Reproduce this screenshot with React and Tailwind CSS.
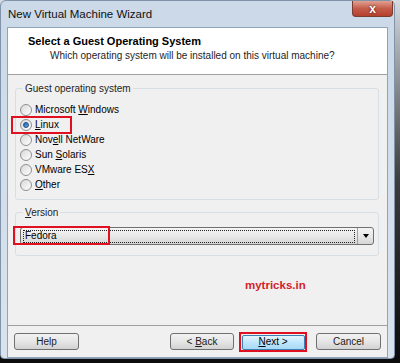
const Radio = ({ checked }) => (
  <span className="w-[12px] h-[12px] rounded-full border border-[#8e8f8f] bg-gradient-to-br from-[#d8d8d8] to-[#ffffff] flex items-center justify-center shrink-0">
    {checked && (
      <span className="w-[6px] h-[6px] rounded-full bg-gradient-to-br from-[#1b5ea5] to-[#6ab0e8] border border-[#1c4f85]" />
    )}
  </span>
);

const Mn = ({ children }) => <span className="underline underline-offset-1">{children}</span>;

const options = [
  { id: 'win', label: <>Microsoft <Mn>W</Mn>indows</> },
  { id: 'linux', label: <><Mn>L</Mn>inux</>, checked: true, marked: true },
  { id: 'novell', label: <>Nov<Mn>e</Mn>ll NetWare</> },
  { id: 'sun', label: <>Sun <Mn>S</Mn>olaris</> },
  { id: 'esx', label: <>VMware ES<Mn>X</Mn></> },
  { id: 'other', label: <><Mn>O</Mn>ther</> },
];

const Button = ({ children, className = '' }) => (
  <button
    className={`h-[17px] rounded-[3px] border border-[#707070] bg-gradient-to-b from-[#f2f2f2] via-[#e6e6e6] to-[#d2d2d2] text-[10px] leading-none text-[#1a1a1a] ${className}`}
  >
    {children}
  </button>
);

export default function App() {
  return (
    <div className="w-[400px] h-[363px] bg-gradient-to-b from-[#d4dbe2] via-[#3c3c3c] to-[#0c0c0c] font-['Liberation_Sans',Arial,sans-serif] text-[10px] text-black overflow-hidden">
      <div className="w-[395px] h-[359px] rounded-t-[6px] rounded-b-[4px] border border-[#8193a8] bg-gradient-to-b from-[#cbd9e8] to-[#d8e3ee] flex flex-col">
        {/* title bar */}
        <div className="h-[26px] flex items-start shrink-0">
          <div className="pl-[7px] pt-[6px] text-[11.5px] leading-[14px] text-[#111]">New Virtual Machine Wizard</div>
          <div className="ml-auto mr-[1px] w-[41px] h-[16px] rounded-b-[4px] border border-t-0 border-[#7a3b32] bg-gradient-to-b from-[#dfa192] via-[#c45c4a] to-[#b4402c] flex items-center justify-center">
            <span className="text-white font-bold text-[12px] leading-none [text-shadow:0_0_2px_#3a0a00]">x</span>
          </div>
        </div>

        {/* client */}
        <div className="mx-[6px] flex-1 flex flex-col border border-[#8fa3ba]">
          <div className="h-[47px] bg-white border-b border-[#a0a0a0] pt-[7px] shrink-0">
            <div className="pl-[20px] text-[11px] font-bold leading-[13px]">Select a Guest Operating System</div>
            <div className="pl-[42px] mt-[1px] leading-[13px] text-[#1e1e1e]">Which operating system will be installed on this virtual machine?</div>
          </div>

          <div className="flex-1 bg-[#f0f0f0] px-[7px] pt-[7px]">
            <fieldset className="border border-[#d5dfe5] rounded-[3px] pl-[4px] pb-[7px] pt-[7px] mr-[1px]">
              <legend className="ml-[3px] px-[2px] leading-[13px] text-[#1e1e1e]">Guest operating system</legend>
              {options.map(o => (
                <div key={o.id} className="h-[15px] flex items-center gap-[3px] relative">
                  <Radio checked={o.checked} />
                  <span className="leading-[13px]">{o.label}</span>
                  {o.marked && (
                    <span className="absolute left-[-9px] top-[-1px] w-[61px] h-[18px] border-2 border-[#e01020]" />
                  )}
                </div>
              ))}
            </fieldset>

            <fieldset className="mt-[6px] border border-[#d5dfe5] rounded-[3px] px-[4px] pt-[8px] pb-[10px] mr-[1px]">
              <legend className="ml-[3px] px-[2px] leading-[13px] text-[#1e1e1e]">
                <Mn>V</Mn>ersion
              </legend>
              <div className="relative h-[18px] rounded-[3px] border border-[#707070] bg-gradient-to-b from-[#f4f4f4] via-[#e8e8e8] to-[#d6d6d6] flex items-center">
                <div className="flex-1 h-[13px] mx-[2px] border border-dotted border-[#222] flex items-center pl-[1px] leading-none">Fedora</div>
                <div className="w-[16px] h-full border-l border-[#a0a0a0] flex items-center justify-center">
                  <span className="w-0 h-0 border-l-[3px] border-r-[3px] border-t-[4px] border-l-transparent border-r-transparent border-t-black" />
                </div>
                <span className="absolute left-[-8px] top-[-2px] w-[97px] h-[19px] border-2 border-[#e01020]" />
              </div>
            </fieldset>

            <div className="mt-[22px] pl-[230px] text-[11.5px] font-bold leading-[14px] text-[#d3232c]">mytricks.in</div>
          </div>

          <div className="h-[32px] shrink-0 bg-[#f0f0f0] border-t border-[#a0a0a0] flex items-start pt-[7px] px-[6px]">
            <Button className="w-[65px]">Help</Button>
            <Button className="w-[64px] ml-auto">&lt; <Mn>B</Mn>ack</Button>
            <div className="ml-[5px] w-[68px] h-[20px] -mt-[1px] border-2 border-[#e01020] flex items-center justify-center">
              <button className="w-[63px] h-[15px] rounded-[2px] border border-[#3c7fb1] bg-gradient-to-b from-[#e6f4fc] via-[#bee6fd] to-[#a7d9f5] text-[10px] leading-none">
                <Mn>N</Mn>ext &gt;
              </button>
            </div>
            <Button className="w-[65px] ml-[9px]">Cancel</Button>
          </div>
        </div>
      </div>
    </div>
  );
}
